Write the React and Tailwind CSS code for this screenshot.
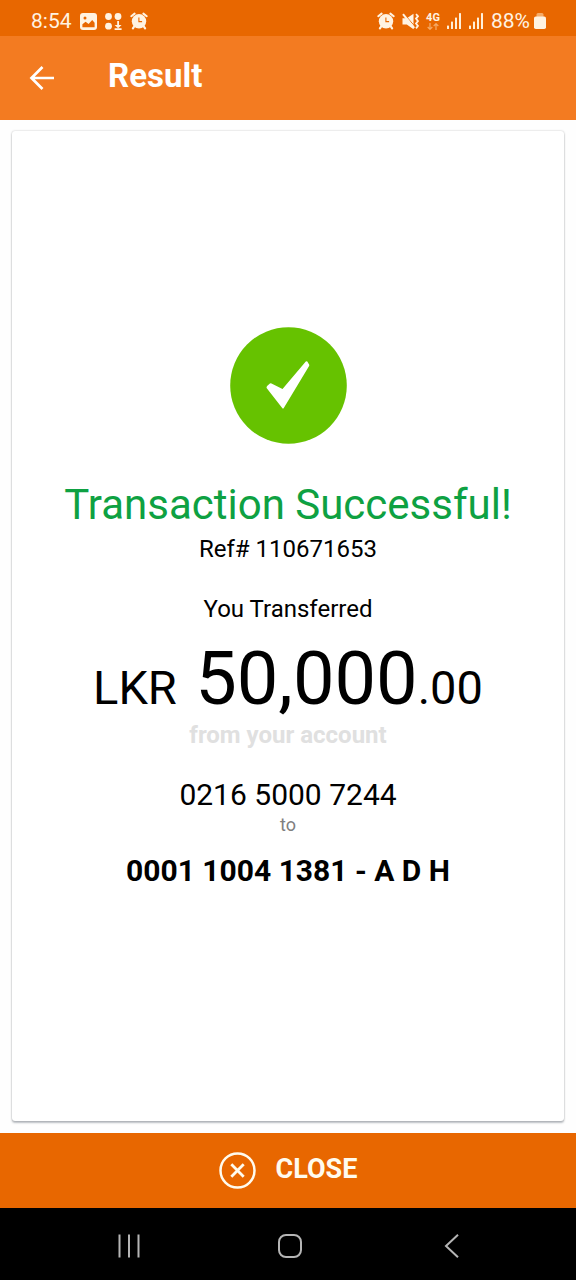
function AlarmIcon() {
  return (
    <svg className="size-[18px] shrink-0" viewBox="0 0 18 18" fill="none" stroke="#fff3e2" aria-hidden="true">
      <circle cx="9" cy="9.3" r="7.2" fill="#fff3e2" stroke="none" />
      <path d="M1.3 4.2 4.6 1.6M16.7 4.2l-3.3-2.6" strokeWidth="2" strokeLinecap="round" />
      <path d="M4.5 14l-1.6 2.4M13.5 14l1.6 2.4" strokeWidth="2.2" strokeLinecap="round" />
      <path d="M8.9 5.4v4.2h3.2" stroke="#e86700" strokeWidth="1.1" />
    </svg>
  );
}

function PictureIcon() {
  return (
    <svg className="h-[17px] w-[17px] shrink-0" viewBox="0 0 17 17" aria-hidden="true">
      <rect width="17" height="17" rx="3" fill="#fff3e2" />
      <path d="M2.4 14.2v-3l3.2-2.4 3 2.3 3.6-4 2.4 2.6v4.5z" fill="#e86700" />
      <circle cx="5" cy="5" r="1.5" fill="#e86700" />
    </svg>
  );
}

function DotsIcon() {
  return (
    <svg className="h-[17px] w-[17px] shrink-0" viewBox="0 0 17 17" fill="#fff3e2" aria-hidden="true">
      <circle cx="3.5" cy="3.5" r="3.4" />
      <circle cx="13" cy="3.5" r="3.4" />
      <circle cx="3.5" cy="13.2" r="3.4" />
      <path d="M12.2 8H14v4h2.6L13.1 15.2 9.600 12h2.600zM9.600 15.300h7V17h-7z" />
    </svg>
  );
}

function MuteIcon() {
  return (
    <svg className="h-[17px] w-[17px] shrink-0" viewBox="0 0 17 17" fill="none" aria-hidden="true">
      <path d="M.5 5.2h4.300L11.500.8v15.400L4.800 11.600H.5z" fill="#fff3e2" />
      <path d="M3.200 2.200 12.500 13" stroke="#e86700" strokeWidth="1" />
      <path d="M1 1.200 12.200 15" stroke="#fff3e2" strokeWidth="2" />
      <path d="M14 1.200l2 2-2 2.400 2 2.500-2 2.400 2 2.400-2 2.400" stroke="#fff3e2" strokeWidth="1.800" />
    </svg>
  );
}

function SignalIcon() {
  return (
    <svg className="h-4 w-[15px] shrink-0" viewBox="0 0 15 16" fill="#fff0da" aria-hidden="true">
      <rect x="0" y="12.4" width="2" height="3.6" rx=".6" />
      <rect x="4" y="8.4" width="2" height="7.6" rx=".6" />
      <rect x="8" y="4.4" width="2" height="11.6" rx=".6" />
      <rect x="12" y="0" width="2" height="16" rx=".6" />
    </svg>
  );
}

function NetworkIcon() {
  return (
    <span className="flex w-[14px] shrink-0 flex-col items-center text-[11px] leading-[10px] font-bold">
      4G
      <svg className="h-[7px] w-3" viewBox="0 0 12 7" fill="none" stroke="#f5ac69" strokeWidth="1.2" aria-hidden="true">
        <path d="M3 0v6M.7 4 3 6.3 5.3 4M9 7V1M6.7 3 9 .7 11.3 3" />
      </svg>
    </span>
  );
}

function StatusBar() {
  return (
    <div className="flex h-9 items-center justify-between bg-[#e86700] pt-1.5 pr-[30px] pl-[31px] text-[#fff3e2]">
      <div className="flex items-center gap-2">
        <span className="text-[21px] leading-6">8:54</span>
        <PictureIcon />
        <DotsIcon />
        <AlarmIcon />
      </div>
      <div className="flex items-center gap-[7px]">
        <AlarmIcon />
        <MuteIcon />
        <NetworkIcon />
        <SignalIcon />
        <SignalIcon />
        <div className="flex items-center gap-1">
          <span className="text-[21px] leading-6">88%</span>
          <svg className="h-4 w-3 shrink-0" viewBox="0 0 12 16" aria-hidden="true">
            <path d="M2.5 4V1.6Q2.5 0 4 0h4q1.5 0 1.5 1.6V4z" fill="#f5ac69" />
            <rect y="3.5" width="12" height="12.5" rx="1.8" fill="#fff3e2" />
          </svg>
        </div>
      </div>
    </div>
  );
}

function AppBar() {
  return (
    <header className="flex h-[84px] items-center gap-[52px] bg-[#f37b21] pl-[29px] text-white">
      <button type="button" aria-label="Back">
        <svg className="h-7 w-[27px]" viewBox="0 0 27 28" fill="none" stroke="currentColor" strokeWidth="2.7" aria-hidden="true">
          <path d="M25 14H3M13.5 3 2.5 14l11 11" />
        </svg>
      </button>
      <h1 className="pb-1 text-[33px] leading-10 font-bold">Result</h1>
    </header>
  );
}

function ResultCard() {
  return (
    <main className="mx-3 mt-[11px] mb-3 flex grow flex-col items-center rounded-[3px] bg-white pt-[196px] pb-12 text-center text-black shadow-[0_0_2px_rgba(0,0,0,0.25),0_2px_2px_rgba(70,80,95,0.35)]">
      <svg className="size-[117px]" viewBox="0 0 117 117" aria-hidden="true">
        <circle cx="58.5" cy="58.5" r="58.3" fill="#66c200" />
        <path d="M36.600 61q-.3-1.200.5-2l2.800-2.600q.7-.5 1.600 0L52.500 62 75.800 34.600q.8-.9 1.500 0l1.800 2.800q.4.700 0 1.700L53.800 81q-.8 1.200-1.600 0z" fill="#fff" />
      </svg>
      <h2 className="mt-[37px] text-[42px] leading-12 text-[#0ea142]">Transaction Successful!</h2>
      <p className="mt-1 text-2xl leading-8">Ref# 110671653</p>
      <p className="mt-7 text-2xl leading-8">You Transferred</p>
      <p className="mt-[14px] text-[47px] leading-none">
        LKR<span className="text-[74px] leading-20"> 50,000</span>.00
      </p>
      <p className="text-2xl leading-8 font-bold text-[#e0e0e0]">from your account</p>
      <p className="mt-[26px] text-[30px] leading-9">0216 5000 7244</p>
      <p className="text-lg leading-6 text-[#808080]">to</p>
      <p className="mt-4 text-[30px] leading-9 font-bold">0001 1004 1381 - A D H</p>
    </main>
  );
}

function SystemNav() {
  return (
    <nav className="flex h-18 items-center justify-between bg-black pt-1 pr-[112px] pl-[116px] text-[#b5b5b5]">
      <button type="button" aria-label="Recent apps">
        <svg className="size-6" viewBox="0 0 24 24" fill="none" stroke="currentColor" strokeWidth="2" aria-hidden="true">
          <path d="M3.5 .5v23M13 .5v23M22.5 .5v23" />
        </svg>
      </button>
      <button type="button" aria-label="Home">
        <svg className="size-6" viewBox="0 0 24 24" fill="none" stroke="currentColor" strokeWidth="2" aria-hidden="true">
          <rect x="1" y="1" width="22" height="22" rx="7" />
        </svg>
      </button>
      <button type="button" aria-label="Back">
        <svg className="size-6" viewBox="0 0 24 24" fill="none" stroke="currentColor" strokeWidth="2" aria-hidden="true">
          <path d="M18 .8 6 12l12 11.2" />
        </svg>
      </button>
    </nav>
  );
}

export default function App() {
  return (
    <div className="flex min-h-screen flex-col bg-[#fefefe] font-['Roboto',sans-serif]">
      <StatusBar />
      <AppBar />
      <ResultCard />
      <button type="button" className="flex h-[75px] items-center justify-center gap-5 bg-[#e86700] text-[#fffbee]">
        <svg className="size-[37px]" viewBox="0 0 37 37" fill="none" stroke="currentColor" strokeWidth="2.5" aria-hidden="true">
          <circle cx="18.5" cy="18.5" r="17" />
          <path d="m12.3 12.3 12.4 12.4M24.7 12.3 12.3 24.7" strokeWidth="2.8" />
        </svg>
        <span className="pb-1 text-[27px] leading-8 font-bold">CLOSE</span>
      </button>
      <SystemNav />
    </div>
  );
}
